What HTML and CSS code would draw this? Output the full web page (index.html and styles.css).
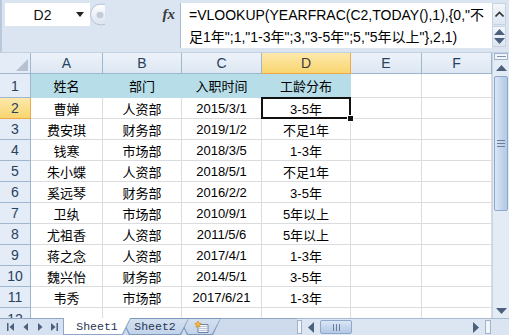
FILE: index.html
```html
<!DOCTYPE html>
<html lang="zh-CN">
<head>
  <meta charset="UTF-8" />
  <meta name="viewport" content="width=device-width, initial-scale=1.0" />
  <title>工龄分布</title>
  <link rel="stylesheet" href="styles.css">
</head>
<body>
<div class="excel">
  <div class="formula-bar">
    <div class="name-col">
      <div class="namebox">
        <span class="cell-ref">D2</span>
        <svg class="drop" width="8" height="5" viewBox="0 0 8 5"><path d="M0 0H8L4 5Z" fill="#222"/></svg>
      </div>
    </div>
    <svg class="splitter" width="15" height="23" viewBox="0 0 15 23">
      <defs>
        <linearGradient id="sp" x1="0" y1="0" x2="0" y2="1">
          <stop offset="0" stop-color="#ffffff"/>
          <stop offset="1" stop-color="#d9e3ef"/>
        </linearGradient>
      </defs>
      <circle cx="11" cy="11.5" r="10.5" fill="url(#sp)" stroke="#b3c3d7"/>
      <ellipse cx="10" cy="12" rx="3.5" ry="3.2" fill="#c3ccd7"/>
    </svg>
    <div class="fx-area"><span class="fx">fx</span></div>
    <div class="formula">
      <div>=VLOOKUP(YEARFRAC(C2,TODAY(),1),{0,"不</div>
      <div>足1年";1,"1-3年";3,"3-5年";5,"5年以上"},2,1)</div>
    </div>
    <div class="fbar-scroll">
      <div class="fbtn">
        <svg width="9" height="6" viewBox="0 0 9 6"><path d="M0.5 5.5L4.5 1.5L8.5 5.5" fill="none" stroke="#333" stroke-width="1.6"/></svg>
      </div>
      <div class="fbtn fbtn-2">
        <svg width="11" height="6" viewBox="0 0 11 6"><path d="M0 6H11L5.5 0Z" fill="#4c5f7d"/></svg>
        <svg width="11" height="6" viewBox="0 0 11 6"><path d="M0 0H11L5.5 6Z" fill="#4c5f7d"/></svg>
      </div>
    </div>
  </div>

  <div class="sheet">
    <div class="grid">
      <div class="corner-cell"><svg width="12" height="12" viewBox="0 0 12 12"><path d="M12 0V12H0Z" fill="#b5c1d0"/></svg></div>
      <div class="ch">A</div>
      <div class="ch">B</div>
      <div class="ch">C</div>
      <div class="ch ch-sel">D</div>
      <div class="ch">E</div>
      <div class="ch">F</div>

      <div class="rh">1</div>
      <div class="c hl">姓名</div><div class="c hl">部门</div><div class="c hl">入职时间</div><div class="c hl">工龄分布</div><div class="c"></div><div class="c"></div>

      <div class="rh rh-sel">2</div>
      <div class="c">曹婵</div><div class="c">人资部</div><div class="c">2015/3/1</div><div class="c active">3-5年</div><div class="c"></div><div class="c"></div>

      <div class="rh">3</div>
      <div class="c">费安琪</div><div class="c">财务部</div><div class="c">2019/1/2</div><div class="c">不足1年</div><div class="c"></div><div class="c"></div>

      <div class="rh">4</div>
      <div class="c">钱寒</div><div class="c">市场部</div><div class="c">2018/3/5</div><div class="c">1-3年</div><div class="c"></div><div class="c"></div>

      <div class="rh">5</div>
      <div class="c">朱小蝶</div><div class="c">人资部</div><div class="c">2018/5/1</div><div class="c">不足1年</div><div class="c"></div><div class="c"></div>

      <div class="rh">6</div>
      <div class="c">奚远琴</div><div class="c">财务部</div><div class="c">2016/2/2</div><div class="c">3-5年</div><div class="c"></div><div class="c"></div>

      <div class="rh">7</div>
      <div class="c">卫纨</div><div class="c">市场部</div><div class="c">2010/9/1</div><div class="c">5年以上</div><div class="c"></div><div class="c"></div>

      <div class="rh">8</div>
      <div class="c">尤祖香</div><div class="c">人资部</div><div class="c">2011/5/6</div><div class="c">5年以上</div><div class="c"></div><div class="c"></div>

      <div class="rh">9</div>
      <div class="c">蒋之念</div><div class="c">人资部</div><div class="c">2017/4/1</div><div class="c">1-3年</div><div class="c"></div><div class="c"></div>

      <div class="rh">10</div>
      <div class="c">魏兴怡</div><div class="c">财务部</div><div class="c">2014/5/1</div><div class="c">3-5年</div><div class="c"></div><div class="c"></div>

      <div class="rh">11</div>
      <div class="c">韦秀</div><div class="c">市场部</div><div class="c">2017/6/21</div><div class="c">1-3年</div><div class="c"></div><div class="c"></div>

      <div class="rh rh-cut">12</div>
      <div class="c"></div><div class="c"></div><div class="c"></div><div class="c"></div><div class="c"></div><div class="c"></div>
    </div>

    <div class="vscroll">
      <div class="vsplit"><span></span></div>
      <div class="sbtn">
        <svg width="11" height="6" viewBox="0 0 11 6"><path d="M0 6H11L5.5 0Z" fill="#4c5f7d"/></svg>
      </div>
      <div class="vthumb"><span class="grip-h"></span></div>
      <div class="track"></div>
      <div class="sbtn">
        <svg width="11" height="6" viewBox="0 0 11 6"><path d="M0 0H11L5.5 6Z" fill="#4c5f7d"/></svg>
      </div>
    </div>
  </div>

  <div class="bottom-bar">
    <div class="nav">
      <svg width="63" height="16" viewBox="0 0 63 16">
        <g fill="#4c5f7d">
          <rect x="7" y="4" width="1.5" height="8"/>
          <path d="M14 4V12L9.5 8Z"/>
          <path d="M28 4V12L23.5 8Z"/>
          <path d="M38 4V12L42.5 8Z"/>
          <path d="M51 4V12L55.5 8Z"/>
          <rect x="56.5" y="4" width="1.5" height="8"/>
        </g>
      </svg>
    </div>
    <div class="tabs">
      <div class="tab tab-active"><div class="tab-in">Sheet1</div></div>
      <div class="tab tab-2"><div class="tab-in">Sheet2</div></div>
      <div class="tab tab-new">
        <div class="tab-in">
          <svg width="18" height="14" viewBox="0 0 18 14">
            <path d="M5 4.5H15V12.5H5Z" fill="#f4f7fb" stroke="#6f84a3"/>
            <path d="M6 6.5H14" stroke="#b8c6d8"/>
            <path d="M6 8.5H14" stroke="#b8c6d8"/>
            <path d="M6 10.5H14" stroke="#b8c6d8"/>
            <path d="M5 1L6 3.2L8.3 3.4L6.6 4.9L7.1 7.2L5 6L2.9 7.2L3.4 4.9L1.7 3.4L4 3.2Z" fill="#f5b935" stroke="#d48a10" stroke-width="0.6"/>
          </svg>
        </div>
      </div>
    </div>
    <div class="hscroll">
      <div class="hsplit"></div>
      <div class="sbtn sbtn-h">
        <svg width="6" height="11" viewBox="0 0 6 11"><path d="M6 0V11L0 5.5Z" fill="#4c5f7d"/></svg>
      </div>
      <div class="hthumb"><span class="grip-v"></span></div>
      <div class="track"></div>
      <div class="sbtn sbtn-h">
        <svg width="6" height="11" viewBox="0 0 6 11"><path d="M0 0V11L6 5.5Z" fill="#4c5f7d"/></svg>
      </div>
      <div class="hsplit hsplit-r"></div>
    </div>
    <div class="corner"></div>
  </div>
</div>
</body>
</html>
```

FILE: styles.css
```css
body { margin: 0; background: #fff; }
.excel { width: 509px; height: 335px; overflow: hidden; font-family: "Liberation Sans", "Noto Sans CJK SC", sans-serif; background: #dbe5f1; }

/* formula bar */
.formula-bar { display: flex; height: 53px; box-sizing: border-box; padding-top: 3px; background: #dbe5f1; border-bottom: 1px solid #c3d0e0; }
.name-col { width: 90px; box-sizing: border-box; padding-left: 3px; border-left: 2px solid #b9c8da; margin-top: -3px; padding-top: 3px; }
.namebox { display: flex; align-items: center; height: 23px; background: #fff; }
.cell-ref { flex: 1; text-align: center; font-size: 14px; color: #111; padding-left: 4px; }
.drop { margin-right: 6px; }
.splitter { display: block; flex: none; }
.fx-area { width: 76px; height: 45px; box-sizing: border-box; border-right: 1px solid #a9bbd1; text-align: right; padding-right: 5px; }
.fx { font-family: "Liberation Serif", serif; font-style: italic; font-weight: bold; font-size: 15px; color: #3a3a3a; line-height: 22px; }
.formula { flex: 1; height: 45px; background: #fff; box-sizing: border-box; padding: 1px 0 0 8px; font-size: 14px; line-height: 22px; color: #000; white-space: nowrap; overflow: hidden; }
.fbar-scroll { width: 17px; display: flex; flex-direction: column; gap: 1px; }
.fbtn { height: 22px; box-sizing: border-box; margin-right: 3px; border: 1px solid #c5d3e3; background: linear-gradient(#f3f6fa, #dde6f1); display: flex; align-items: center; justify-content: center; }
.fbtn-2 { height: 21px; flex-direction: column; gap: 3px; }

/* grid */
.sheet { display: flex; height: 265px; }
.grid { width: 492px; display: grid; grid-template-columns: 31px 72px 79px 80px 89px 71px 70px; grid-template-rows: 21px 24px repeat(11, 21px); overflow: hidden; background: #fff; }
.grid > div { box-sizing: border-box; display: flex; align-items: center; justify-content: center; white-space: nowrap; }
.corner-cell { background: #e4ecf7; border-right: 1px solid #9eb6ce; border-bottom: 1px solid #9eb6ce; align-items: flex-end !important; justify-content: flex-end !important; padding: 0 2px 2px 0; }
.ch { background: linear-gradient(#edf2f9, #dde7f3); border-right: 1px solid #9eb6ce; border-bottom: 1px solid #9eb6ce; font-size: 14px; color: #27415f; }
.ch-sel { background: linear-gradient(#fde9ad, #f8d56f); border-color: #f0a848; color: #3b3b3b; }
.rh { background: #e4ecf7; border-right: 1px solid #9eb6ce; border-bottom: 1px solid #9eb6ce; font-size: 14px; color: #27415f; }
.rh-sel { background: linear-gradient(#fde9ad, #f8d56f); border-color: #f0a848; }
.rh-cut { align-items: flex-start !important; padding-top: 3px; }
.c { border-right: 1px solid #dadcdd; border-bottom: 1px solid #dadcdd; font-size: 13px; color: #000; }
.hl { background: #b7dee8; border-color: #b7dee8; border-bottom-color: #b7dee8; }
.active { position: relative; }
.active::after { content: ""; position: absolute; left: -1px; top: -1px; right: -1px; bottom: -1px; border: 2px solid #111; }
.active::before { content: ""; position: absolute; right: -4px; bottom: -4px; width: 5px; height: 5px; background: #111; border: 1px solid #fff; z-index: 1; }

/* scrollbars */
.vscroll { width: 17px; display: flex; flex-direction: column; background: #e3ebf5; box-sizing: border-box; border-left: 1px solid #c7d4e4; }
.vsplit { height: 7px; margin: 0 1px; box-sizing: border-box; border: 1px solid #9fb3cc; background: #f1f5fa; display: flex; align-items: center; justify-content: center; }
.vsplit span { width: 9px; height: 1px; border-top: 1px solid #8092aa; }
.sbtn { height: 15px; flex: none; display: flex; align-items: center; justify-content: center; }
.vthumb { height: 135px; margin: 1px 1px 0; box-sizing: border-box; border: 1px solid #8ea8c9; border-radius: 2px; background: linear-gradient(90deg, #dbe7f6, #c3d5ec 55%, #b4c9e4); display: flex; align-items: center; justify-content: center; }
.grip-h { width: 8px; height: 5px; border-top: 1px solid #6b7f9c; border-bottom: 1px solid #6b7f9c; position: relative; }
.grip-h::after { content: ""; position: absolute; left: 0; right: 0; top: 2px; border-top: 1px solid #6b7f9c; }
.track { flex: 1; }

/* bottom bar */
.bottom-bar { display: flex; height: 17px; background: #cfdcee; }
.nav { width: 63px; border-top: 1px solid #8fa6c6; box-sizing: border-box; background: #d6e2f1; }
.nav svg { display: block; }
.tabs { width: 234px; display: flex; background: linear-gradient(#8fa6c6 0 1px, #cddbed 1px); }
.tab { height: 17px; width: 68px; padding: 0 1px 1px; box-sizing: border-box; background: #7d98bd; clip-path: polygon(0 0, 100% 0, calc(100% - 8px) 100%, 8px 100%); margin-left: -10px; position: relative; }
.tab-in { height: 100%; clip-path: polygon(0 0, 100% 0, calc(100% - 8px) 100%, 8px 100%); display: flex; align-items: center; justify-content: center; font-family: "Liberation Mono", monospace; font-size: 11.5px; color: #1e3553; background: linear-gradient(#d3e0f0, #c2d3ea); }
.tab-active { margin-left: 0; z-index: 3; clip-path: polygon(0 0, 100% 0, calc(100% - 8px) 100%, 0 100%); padding-left: 1px; background: #8fa6c6; }
.tab-active .tab-in { background: #fff; clip-path: polygon(0 0, 100% 0, calc(100% - 8px) 100%, 0 100%); }
.tab-2 { z-index: 2; padding-top: 1px; }
.tab-new { width: 42px; z-index: 1; padding-top: 1px; }
.tab-new .tab-in { padding-left: 4px; }
.hscroll { width: 195px; display: flex; align-items: stretch; border-top: 1px solid #a7bbd4; box-sizing: border-box; background: #dce6f2; }
.hsplit { width: 5px; margin: 1px 1px 1px 0; box-sizing: border-box; border: 1px solid #9fb3cc; background: #f1f5fa; }
.hsplit-r { width: 6px; margin: 1px 1px 1px 2px; }
.sbtn-h { width: 15px; height: auto; }
.hthumb { width: 32px; margin: 1px 0 1px 2px; box-sizing: border-box; border: 1px solid #8ea8c9; border-radius: 2px; background: linear-gradient(#dbe7f6, #c3d5ec 55%, #b4c9e4); display: flex; align-items: center; justify-content: center; }
.grip-v { width: 5px; height: 7px; border-left: 1px solid #6b7f9c; border-right: 1px solid #6b7f9c; position: relative; }
.grip-v::after { content: ""; position: absolute; top: 0; bottom: 0; left: 2px; border-left: 1px solid #6b7f9c; }
.corner { flex: 1; border-top: 1px solid #a7bbd4; background: #dbe5f1; }
```
